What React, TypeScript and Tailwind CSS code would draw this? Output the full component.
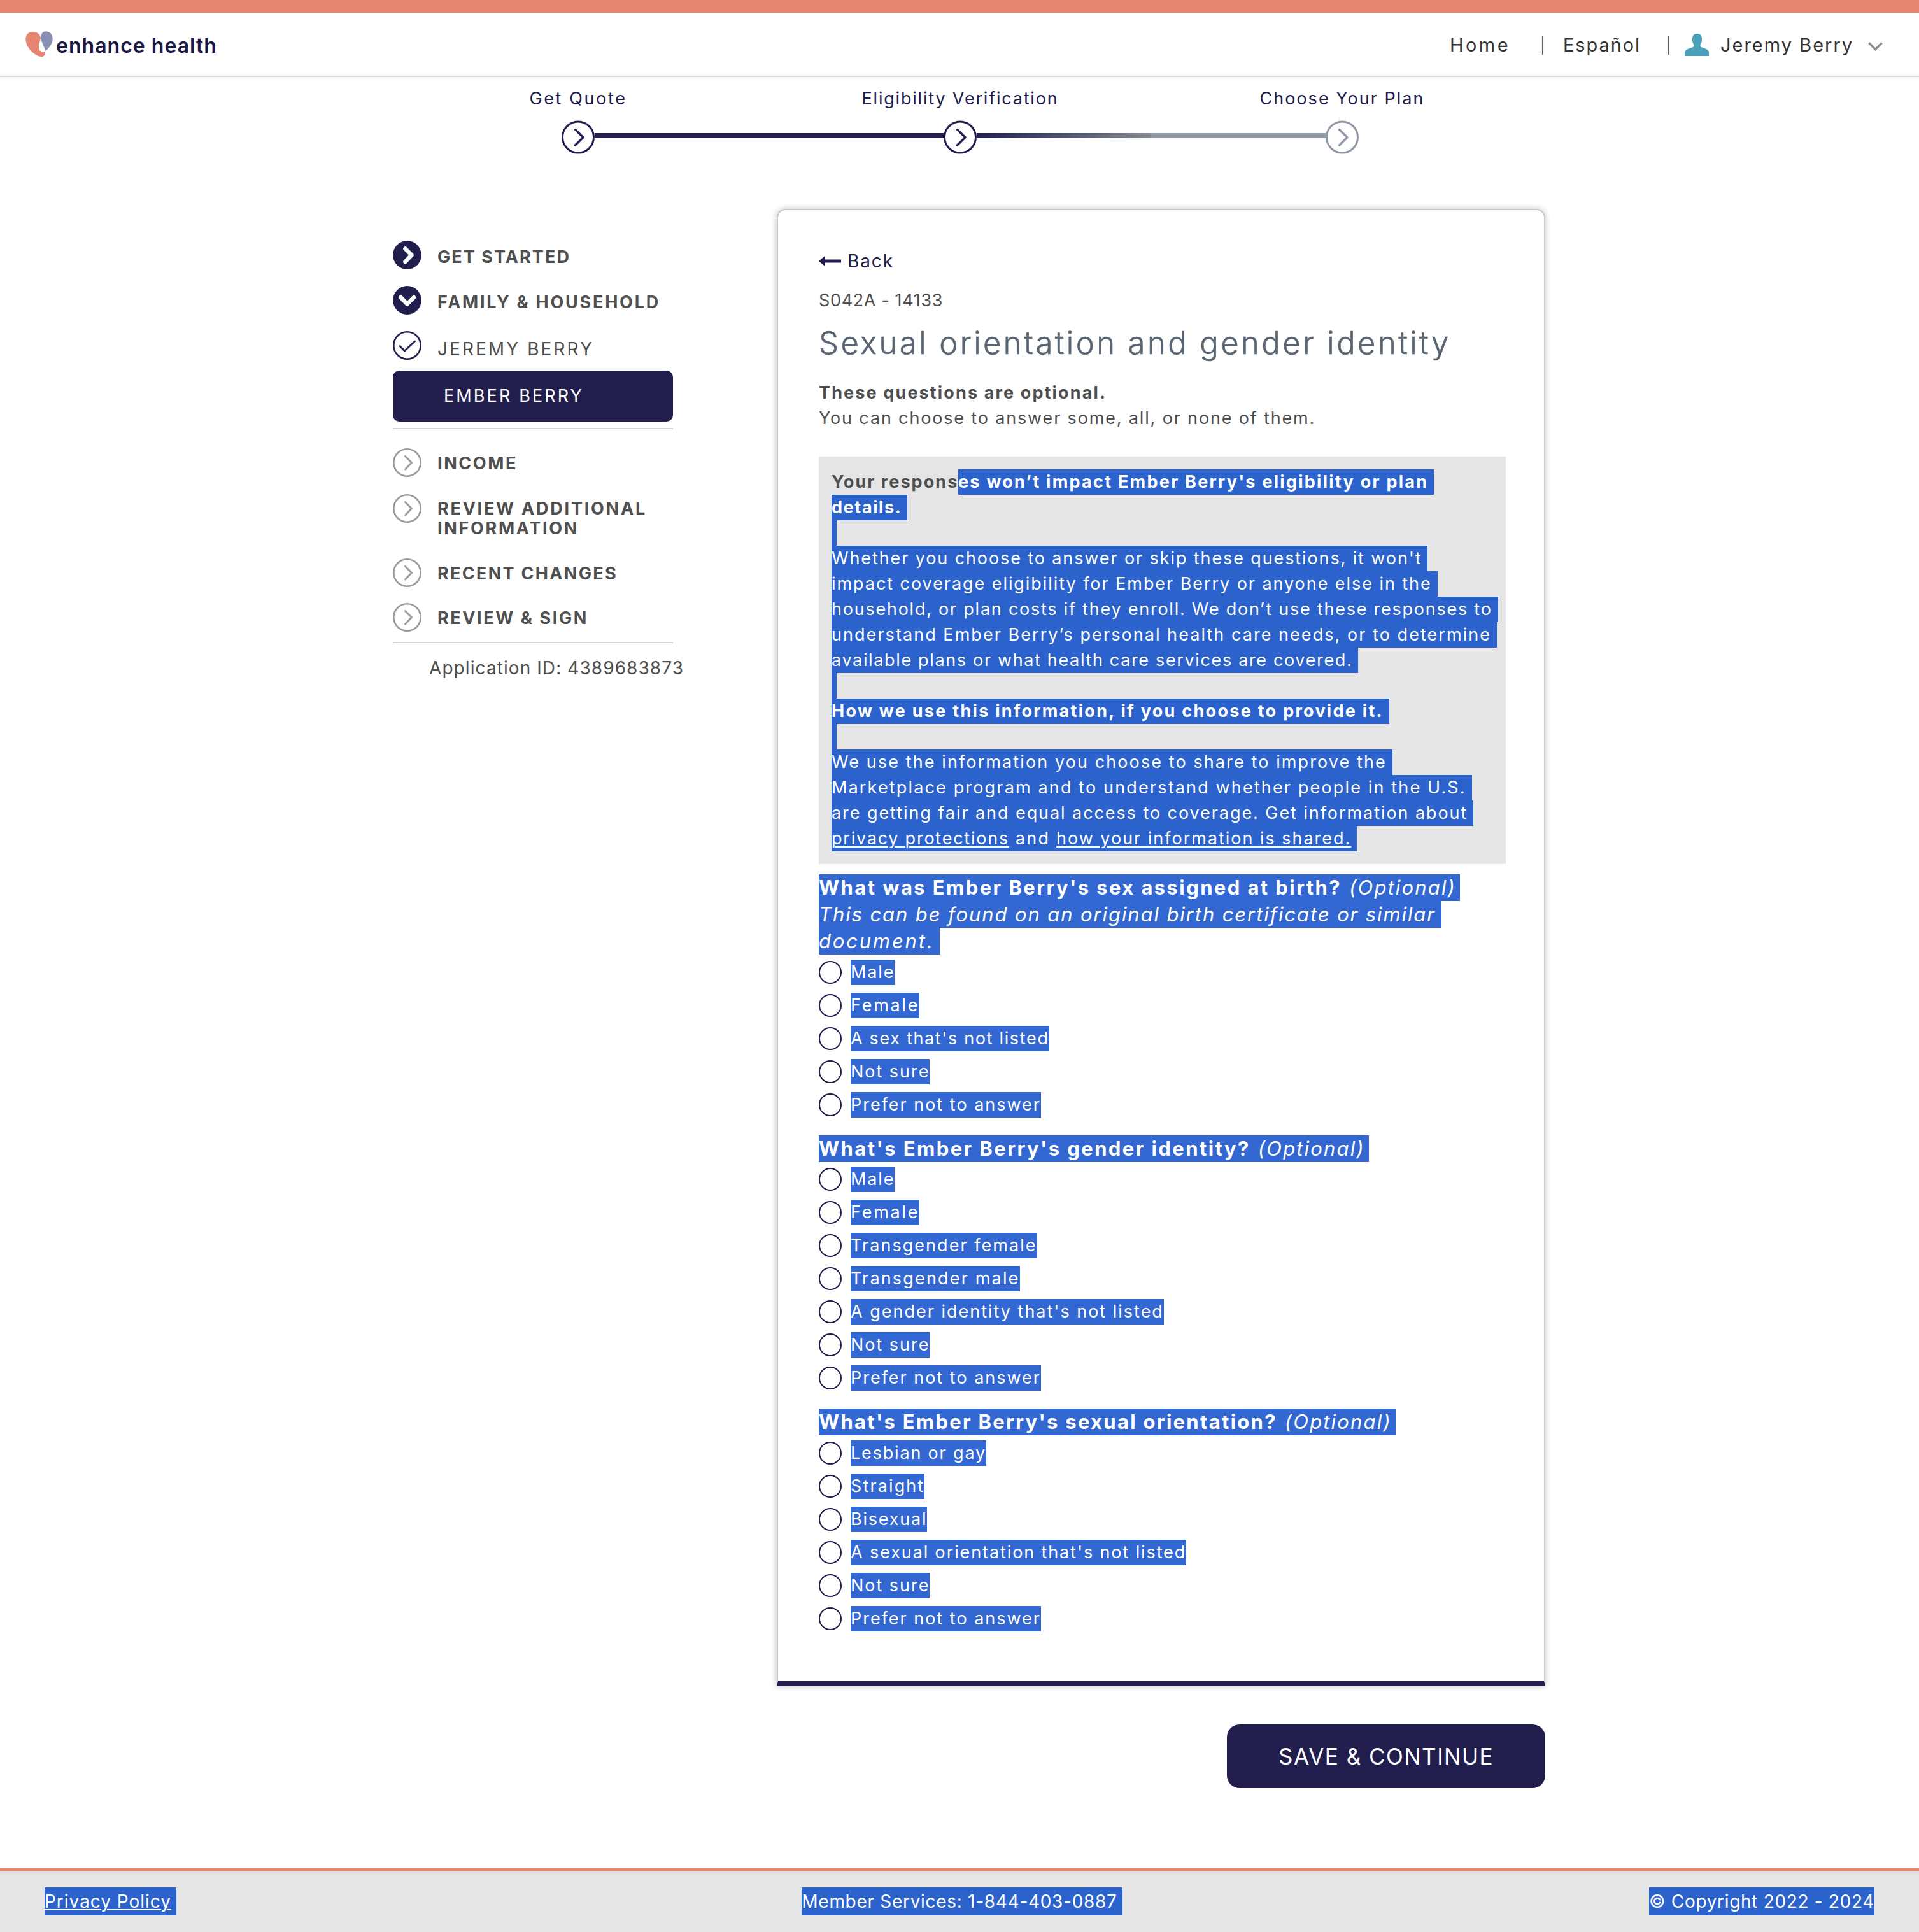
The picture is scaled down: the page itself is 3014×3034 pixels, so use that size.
import type { ReactNode } from "react";

type Label = { text: string; tracking: string };

const SEX_OPTIONS: Label[] = [
  { text: "Male", tracking: "tracking-[1.89px]" },
  { text: "Female", tracking: "tracking-[2.78px]" },
  { text: "A sex that's not listed", tracking: "tracking-[1.66px]" },
  { text: "Not sure", tracking: "tracking-[1.97px]" },
  { text: "Prefer not to answer", tracking: "tracking-[1.99px]" },
];

const GENDER_OPTIONS: Label[] = [
  { text: "Male", tracking: "tracking-[1.89px]" },
  { text: "Female", tracking: "tracking-[2.78px]" },
  { text: "Transgender female", tracking: "tracking-[2.05px]" },
  { text: "Transgender male", tracking: "tracking-[2.17px]" },
  { text: "A gender identity that's not listed", tracking: "tracking-[1.99px]" },
  { text: "Not sure", tracking: "tracking-[1.97px]" },
  { text: "Prefer not to answer", tracking: "tracking-[1.99px]" },
];

const ORIENTATION_OPTIONS: Label[] = [
  { text: "Lesbian or gay", tracking: "tracking-[1.82px]" },
  { text: "Straight", tracking: "tracking-[2.13px]" },
  { text: "Bisexual", tracking: "tracking-[1.8px]" },
  { text: "A sexual orientation that's not listed", tracking: "tracking-[1.89px]" },
  { text: "Not sure", tracking: "tracking-[1.97px]" },
  { text: "Prefer not to answer", tracking: "tracking-[1.99px]" },
];

function Logo() {
  return (
    <div className="flex items-center">
      <svg className="h-[41px] w-[43px]" viewBox="119 146 129 123">
        <path
          fill="#e58572"
          d="M191 176C186 158 172 148 153 148C132 149 120 163 120 183C120 217 150 252 180 263C193 269 207 267 210 256C212 250 212 246 211 239C208 244 204 245 199 244C187 242 182 232 182 216C183 199 190 193 191 176Z"
        />
        <path
          fill="#8a90b5"
          d="M190 176C193 158 201 147 215 147C235 147 247 162 247 182C247 205 230 225 214 239C208 222 194 196 190 176Z"
        />
      </svg>
      <span className="ml-[5px] pt-1 text-[32px] leading-10 font-semibold tracking-[1.02px] text-[#1b1848]">
        enhance health
      </span>
    </div>
  );
}

function Header() {
  return (
    <header className="flex h-[121px] items-center justify-between border-t-[20px] border-b-2 border-t-[#e58572] border-b-[#d8d8d8] pr-[57px] pl-10 whitespace-nowrap">
      <Logo />
      <nav className="flex items-center pt-[2px] text-[29px] leading-10 text-[#333333]">
        <span className="w-[95px] tracking-[3.43px]">Home</span>
        <span className="ml-[41px] w-5 text-center text-[25px] font-light">|</span>
        <span className="ml-[22px] w-[122px] tracking-[1.91px]">Español</span>
        <span className="ml-[34px] w-5 text-center text-[25px] font-light">|</span>
        <svg className="ml-[15px] h-[35px] w-[38px]" viewBox="0 0 38 35">
          <path
            fill="#4aa0ba"
            d="M0 35V29C1 24 8 23 13 21C15 20 15 18 13.5 16C12 13 12 10 12 8C12 2 15 0 19.5 0S27 2 27 8C27 10 27 13 25.5 16C24 18 24 20 26 21C31 23 37 24 38 29V35Z"
          />
        </svg>
        <span className="ml-[18px] w-[209px] tracking-[1.99px]">Jeremy Berry</span>
        <svg className="mt-1 ml-[23px] h-4 w-[23px]" viewBox="0 0 23 16" fill="none">
          <path d="M1.5 2.5L11.5 12.5L21.5 2.5" stroke="#8c8c8c" strokeWidth="3.4" />
        </svg>
      </nav>
    </header>
  );
}

function Step({ label, tracking, color, before, after }: { label: string; tracking: string; color: string; before: string; after: string }) {
  return (
    <div className="flex w-[600px] flex-col items-center">
      <span className={`text-[27px] leading-8 whitespace-nowrap text-[#211e4d] ${tracking}`}>{label}</span>
      <div className="mt-[18px] flex h-[53px] w-full items-center">
        <div className={`mb-[5px] h-2 flex-1 ${before}`} />
        <svg className="h-[53px] w-[52px]" viewBox="0 0 52 53" fill="none" stroke={color}>
          <circle cx="26" cy="26.5" r="24.5" strokeWidth="3" />
          <path d="M21.5 14.5L34 26.8L21.5 39" strokeWidth="3.4" strokeLinecap="round" strokeLinejoin="round" />
        </svg>
        <div className={`mb-[5px] h-2 flex-1 ${after}`} />
      </div>
    </div>
  );
}

function Stepper() {
  return (
    <div className="ml-[608px] flex pt-[18px]">
      <Step label="Get Quote" tracking="tracking-[2.62px]" color="#211e4d" before="bg-transparent" after="bg-[#211e4d]" />
      <Step label="Eligibility Verification" tracking="tracking-[1.8px]" color="#211e4d" before="bg-[#211e4d]" after="bg-linear-to-r from-[#211e4d] to-[#85898e]" />
      <Step label="Choose Your Plan" tracking="tracking-[2.02px]" color="#8f98a4" before="bg-[#8f98a4]" after="bg-transparent" />
    </div>
  );
}

const ICON_PATHS = {
  right: "M19.5 12.5L29.5 22.5L19.5 33",
  down: "M12.5 18L22.5 28.5L33 18",
  check: "M11 23.5L18.5 31L34.5 16",
};

function NavIcon({ shape, tone }: { shape: keyof typeof ICON_PATHS; tone: "solid" | "navy" | "gray" }) {
  const solid = tone === "solid";
  const color = tone === "gray" ? "#9a9a9a" : "#211e4d";
  return (
    <svg className="h-[45px] w-[45px] shrink-0" viewBox="0 0 45 45" fill="none">
      <circle cx="22.5" cy="22.5" r={solid ? 22.4 : 21.2} fill={solid ? color : "none"} stroke={solid ? "none" : color} strokeWidth="2.6" />
      <path d={ICON_PATHS[shape]} stroke={solid ? "#ffffff" : color} strokeWidth={solid ? 6.6 : 2.9} strokeLinecap="round" strokeLinejoin="round" />
    </svg>
  );
}

function NavItem({ icon, className, children }: { icon: ReactNode; className: string; children: ReactNode }) {
  return (
    <div className="flex h-[45px] gap-[25px] whitespace-nowrap">
      {icon}
      <div className={`flex flex-col leading-[31px] ${className}`}>{children}</div>
    </div>
  );
}

function Sidebar() {
  return (
    <aside className="ml-[617px] w-[440px] shrink-0 pt-[50px] text-[27px] font-bold text-[#4f4f4f]">
      <NavItem className="pt-[10px]" icon={<NavIcon shape="right" tone="solid" />}>
        <span className="tracking-[2.07px]">GET STARTED</span>
      </NavItem>
      <div className="mt-[26px]">
        <NavItem className="pt-[10px]" icon={<NavIcon shape="down" tone="solid" />}>
          <span className="tracking-[2.75px]">FAMILY &amp; HOUSEHOLD</span>
        </NavItem>
      </div>
      <div className="mt-[26px]">
        <NavItem className="pt-[13px] text-[28px] font-normal" icon={<NavIcon shape="check" tone="navy" />}>
          <span className="tracking-[3.05px]">JEREMY BERRY</span>
        </NavItem>
      </div>
      <div className="mt-[17px] h-20 rounded-[10px] bg-[#211e4d] pl-20 leading-[80px] font-normal tracking-[3.11px] text-white">
        EMBER BERRY
      </div>
      <div className="mt-[10px] h-0.5 bg-[#d5d5d5]" />
      <div className="mt-[30px]">
        <NavItem className="pt-2" icon={<NavIcon shape="right" tone="gray" />}>
          <span className="tracking-[2.58px]">INCOME</span>
        </NavItem>
      </div>
      <div className="mt-[27px]">
        <NavItem className="pt-[7px]" icon={<NavIcon shape="right" tone="gray" />}>
          <span className="tracking-[2.77px]">REVIEW ADDITIONAL</span>
          <span className="tracking-[2.69px]">INFORMATION</span>
        </NavItem>
      </div>
      <div className="mt-[56px]">
        <NavItem className="pt-2" icon={<NavIcon shape="right" tone="gray" />}>
          <span className="tracking-[2.3px]">RECENT CHANGES</span>
        </NavItem>
      </div>
      <div className="mt-[25px]">
        <NavItem className="pt-2" icon={<NavIcon shape="right" tone="gray" />}>
          <span className="tracking-[2.59px]">REVIEW &amp; SIGN</span>
        </NavItem>
      </div>
      <div className="mt-4 h-0.5 bg-[#d5d5d5]" />
      <p className="mt-[19px] pl-[57px] text-[28px] leading-10 font-normal tracking-[1.08px] whitespace-nowrap">
        Application ID: 4389683873
      </p>
    </aside>
  );
}

/* Highlighted run of text; the right padding is the selected line break. */
function Mark({ className, children }: { className: string; children?: ReactNode }) {
  return <span className={`inline-block text-white ${className}`}>{children}</span>;
}

function Question({ title, tracking }: { title: string; tracking: string }) {
  return (
    <h2 className="h-[42px] text-[31px] leading-[42px]">
      <Mark className="h-[42px] bg-[#3367d1] pr-1.5">
        <b className={`font-bold ${tracking}`}>{title}</b>
        <i className="ml-3 tracking-[2.15px]">(Optional)</i>
      </Mark>
    </h2>
  );
}

function Options({ items }: { items: Label[] }) {
  return (
    <ul className="flex flex-col gap-3">
      {items.map((item) => (
        <li key={item.text} className="flex h-10 items-center">
          <span className="h-9 w-9 rounded-full border-2 border-[#211e4d] bg-white" />
          <span className={`ml-[14px] h-10 bg-[#3367d1] leading-10 text-white ${item.tracking}`}>{item.text}</span>
        </li>
      ))}
    </ul>
  );
}

function Line({ children }: { children?: ReactNode }) {
  return <div className="flex h-10 leading-10">{children}</div>;
}

const HL = "h-10 bg-[#2c62cc] pr-[9px]";
const HL_EMPTY = "h-10 w-2 bg-[#2c62cc]";

function Notice() {
  return (
    <div className="mt-10 bg-[#e5e5e5] p-5">
      <Line>
        <span className="w-[199px] font-bold tracking-[2.06px]">Your respons</span>
        <Mark className={`${HL} font-bold tracking-[2.26px]`}>es won’t impact Ember Berry's eligibility or plan</Mark>
      </Line>
      <Line><Mark className={`${HL} font-bold tracking-[1.59px]`}>details.</Mark></Line>
      <Line><Mark className={HL_EMPTY} /></Line>
      <Line><Mark className={`${HL} tracking-[1.89px]`}>Whether you choose to answer or skip these questions, it won't</Mark></Line>
      <Line><Mark className={`${HL} tracking-[1.94px]`}>impact coverage eligibility for Ember Berry or anyone else in the</Mark></Line>
      <Line><Mark className={`${HL} tracking-[1.76px]`}>household, or plan costs if they enroll. We don’t use these responses to</Mark></Line>
      <Line><Mark className={`${HL} tracking-[2.05px]`}>understand Ember Berry’s personal health care needs, or to determine</Mark></Line>
      <Line><Mark className={`${HL} tracking-[1.65px]`}>available plans or what health care services are covered.</Mark></Line>
      <Line><Mark className={HL_EMPTY} /></Line>
      <Line><Mark className={`${HL} font-bold tracking-[2.28px]`}>How we use this information, if you choose to provide it.</Mark></Line>
      <Line><Mark className={HL_EMPTY} /></Line>
      <Line><Mark className={`${HL} tracking-[2.1px]`}>We use the information you choose to share to improve the</Mark></Line>
      <Line><Mark className={`${HL} tracking-[2.15px]`}>Marketplace program and to understand whether people in the U.S.</Mark></Line>
      <Line><Mark className={`${HL} tracking-[1.93px]`}>are getting fair and equal access to coverage. Get information about</Mark></Line>
      <Line>
        <Mark className={HL}>
          <a className="tracking-[1.76px] underline decoration-2 underline-offset-[3px]">privacy protections</a>
          <span className="tracking-[2.27px]"> and </span>
          <a className="tracking-[1.98px] underline decoration-2 underline-offset-[3px]">how your information is shared.</a>
        </Mark>
      </Line>
    </div>
  );
}

function FormCard() {
  return (
    <section className="h-[2320px] rounded-t-[14px] border-2 border-b-8 border-[#c9c9c9] border-b-[#211e4d] bg-white pt-[60px] pr-[60px] pl-16 text-[27px] whitespace-nowrap text-[#4f4f4f] shadow-[0_0_10px_1px_rgba(0,0,0,0.2)]">
      <div className="flex h-10 items-center text-[28px] leading-10 text-[#211e4d]">
        <svg className="h-[18px] w-9" viewBox="0 0 36 18">
          <path d="M0 9L10 0.5V6.5H35V11.5H10V17.5Z" fill="#211e4d" />
        </svg>
        <span className="ml-[9px] tracking-[1.9px]">Back</span>
      </div>
      <p className="mt-[22px] leading-10 tracking-[0.64px]">S042A - 14133</p>
      <h1 className="mt-[17px] text-[49px] leading-[60px] font-light tracking-[3.42px] text-[#5a6573] [-webkit-text-stroke:0.6px_#5a6573]">
        Sexual orientation and gender identity
      </h1>
      <p className="mt-7 leading-10 font-bold tracking-[2.13px]">These questions are optional.</p>
      <p className="leading-10 tracking-[1.84px]">You can choose to answer some, all, or none of them.</p>
      <Notice />
      <div className="mt-4">
        <Question title="What was Ember Berry's sex assigned at birth?" tracking="tracking-[2.41px]" />
        <div className="h-[42px] text-[31px] leading-[42px] italic">
          <Mark className="h-[42px] bg-[#3367d1] pr-[9px] tracking-[1.89px]">This can be found on an original birth certificate or similar</Mark>
        </div>
        <div className="h-[42px] text-[31px] leading-[42px] italic">
          <Mark className="h-[42px] bg-[#3367d1] pr-[9px] tracking-[2.82px]">document.</Mark>
        </div>
      </div>
      <div className="mt-2"><Options items={SEX_OPTIONS} /></div>
      <div className="mt-7"><Question title="What's Ember Berry's gender identity?" tracking="tracking-[2.42px]" /></div>
      <div className="mt-[7px]"><Options items={GENDER_OPTIONS} /></div>
      <div className="mt-7"><Question title="What's Ember Berry's sexual orientation?" tracking="tracking-[2.28px]" /></div>
      <div className="mt-2"><Options items={ORIENTATION_OPTIONS} /></div>
    </section>
  );
}

function Footer() {
  return (
    <footer className="mt-[126px] grid h-[100px] grid-cols-3 border-t-4 border-[#e58572] bg-[#e5e5e5] px-[70px] pt-[26px] text-[28px] leading-[44px] whitespace-nowrap">
      <div>
        <Mark className="h-11 bg-[#2c62cc] pr-2">
          <a className="tracking-[0.98px] underline decoration-2 underline-offset-2">Privacy Policy</a>
        </Mark>
      </div>
      <div className="pl-2 text-center">
        <Mark className="h-11 bg-[#2c62cc] pr-2 tracking-[0.7px]">Member Services: 1-844-403-0887</Mark>
      </div>
      <div className="text-right">
        <Mark className="h-11 bg-[#2c62cc] tracking-[0.67px]">© Copyright 2022 - 2024</Mark>
      </div>
    </footer>
  );
}

export default function App() {
  return (
    <div className="h-[3034px] w-[3014px] overflow-hidden bg-white font-[Inter,'Liberation_Sans',sans-serif]">
      <Header />
      <Stepper />
      <main className="mt-[86px] flex">
        <Sidebar />
        <div className="ml-[163px] flex w-[1207px] flex-col">
          <FormCard />
          <button className="mt-[60px] h-[100px] w-[500px] self-end rounded-[20px] bg-[#211e4d] text-[35px] tracking-[1.48px] text-white">
            SAVE &amp; CONTINUE
          </button>
        </div>
      </main>
      <Footer />
    </div>
  );
}
